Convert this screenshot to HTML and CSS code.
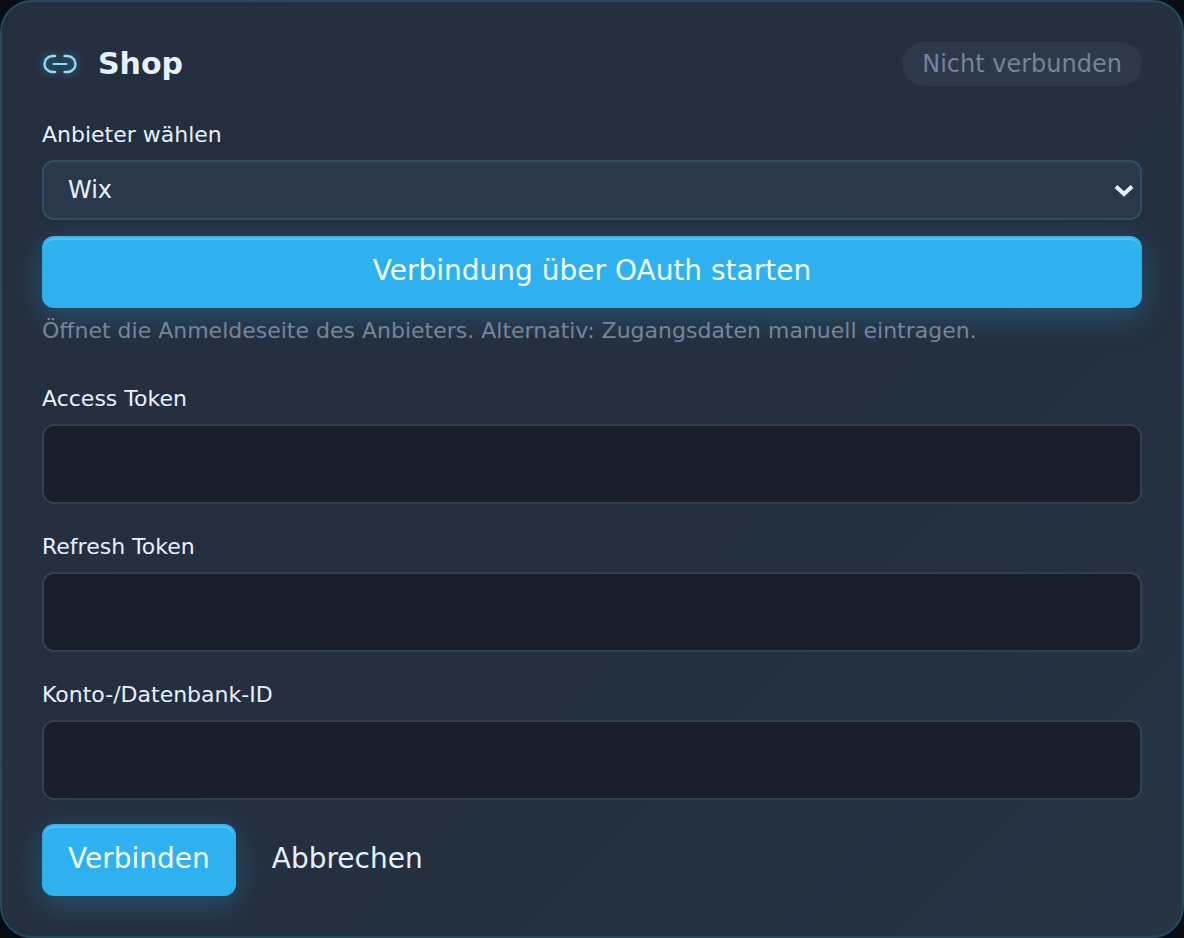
FILE: index.html
```html
<!DOCTYPE html>
<html lang="de">
<head>
  <meta charset="UTF-8">
  <meta name="viewport" content="width=device-width, initial-scale=1">
  <title>Shop</title>
  <link rel="stylesheet" href="styles.css">
</head>
<body>
  <form class="card">
    <header class="card-header">
      <svg class="card-icon" viewBox="0 0 36 36" aria-hidden="true">
        <path stroke-width="2.400" d="M13 10h-2.500a8 8 0 0 0 0 16H13M22.500 10H25.500a8 8 0 0 1 0 16h-3"/>
        <path stroke-width="2" d="M11.500 18h13"/>
      </svg>
      <h2 class="card-title">Shop</h2>
      <span class="badge">Nicht verbunden</span>
    </header>

    <div class="field">
      <label for="provider">Anbieter wählen</label>
      <div class="select-wrap">
        <select id="provider" class="select">
          <option>Wix</option>
        </select>
        <svg class="chevron" viewBox="0 0 20 14" aria-hidden="true"><path d="M2 2.500l8 7.500 8-7.500"/></svg>
      </div>
    </div>

    <button type="button" class="btn btn-primary btn-oauth">Verbindung über OAuth starten</button>
    <p class="hint">Öffnet die Anmeldeseite des Anbieters. Alternativ: Zugangsdaten manuell eintragen.</p>

    <div class="fields">
      <div class="field">
        <label for="accessToken">Access Token</label>
        <input id="accessToken" class="input" type="text">
      </div>
      <div class="field">
        <label for="refreshToken">Refresh Token</label>
        <input id="refreshToken" class="input" type="text">
      </div>
      <div class="field">
        <label for="accountId">Konto-/Datenbank-ID</label>
        <input id="accountId" class="input" type="text">
      </div>
    </div>

    <div class="actions">
      <button type="submit" class="btn btn-primary">Verbinden</button>
      <button type="button" class="btn btn-ghost">Abbrechen</button>
    </div>
  </form>
</body>
</html>
```
FILE: styles.css
```css
*{box-sizing:border-box;}

body{
  margin:0;
  background:#090c13;
  color:#e6f1ff;
  font-family:"DejaVu Sans",sans-serif;
  font-size:22px;
}

.card{
  padding:40px;
  border:2px solid #254a5f;
  border-radius:32px;
  background:linear-gradient(135deg,#252e3e,#242f3f 60%,#263445);
}

.card-header{display:flex;align-items:center;margin-bottom:32px;}
.card-icon{
  width:36px;
  height:36px;
  margin-right:20px;
  fill:none;
  stroke:#93daf5;
  stroke-linecap:round;
  overflow:visible;
  filter:drop-shadow(0 0 5px #2496c4);
}
.card-title{margin:0;font-size:30px;line-height:36px;font-weight:bold;}
.badge{
  margin-left:auto;
  padding:8px 20px;
  border-radius:22px;
  background:#2d384a;
  color:#768499;
  font-size:24px;
  line-height:28px;
}

.field label{display:block;margin-bottom:8px;line-height:34px;}

.select-wrap{position:relative;}
.select{
  appearance:none;
  display:block;
  width:100%;
  height:60px;
  padding:0 40px 0 24px;
  border:2px solid #2b5065;
  border-radius:12px;
  background:#2b374a;
  color:#e6f1ff;
  font:inherit;
  font-size:24px;
}
.chevron{
  position:absolute;
  right:8px;
  top:24px;
  width:20px;
  height:14px;
  fill:none;
  stroke:#e6f1ff;
  stroke-width:4;
  pointer-events:none;
}

.btn{
  padding:14px 24px 16px;
  border:2px solid transparent;
  border-radius:12px;
  color:#e6f1ff;
  font:inherit;
  font-size:28px;
  line-height:38px;
  cursor:pointer;
}
.btn-primary{
  border-color:#30b1ef;
  border-top-color:#42b3e6;
  background:#30b1ef;
  color:#f0fcff;
  box-shadow:0 8px 32px rgba(46,176,238,0.3),inset 0 2px 0 rgba(255,255,255,0.2);
}
.btn-oauth{display:block;width:100%;margin-top:16px;}
.btn-ghost{background:transparent;}

.hint{margin:6px 0 34px;color:#75859a;line-height:34px;}

.fields{display:grid;gap:26px;}
.input{
  display:block;
  width:100%;
  height:80px;
  padding:0 24px;
  border:2px solid #323f4e;
  border-radius:12px;
  background:#181f2a;
  color:#e6f1ff;
  font:inherit;
}

.actions{display:flex;gap:10px;margin-top:24px;}
```
